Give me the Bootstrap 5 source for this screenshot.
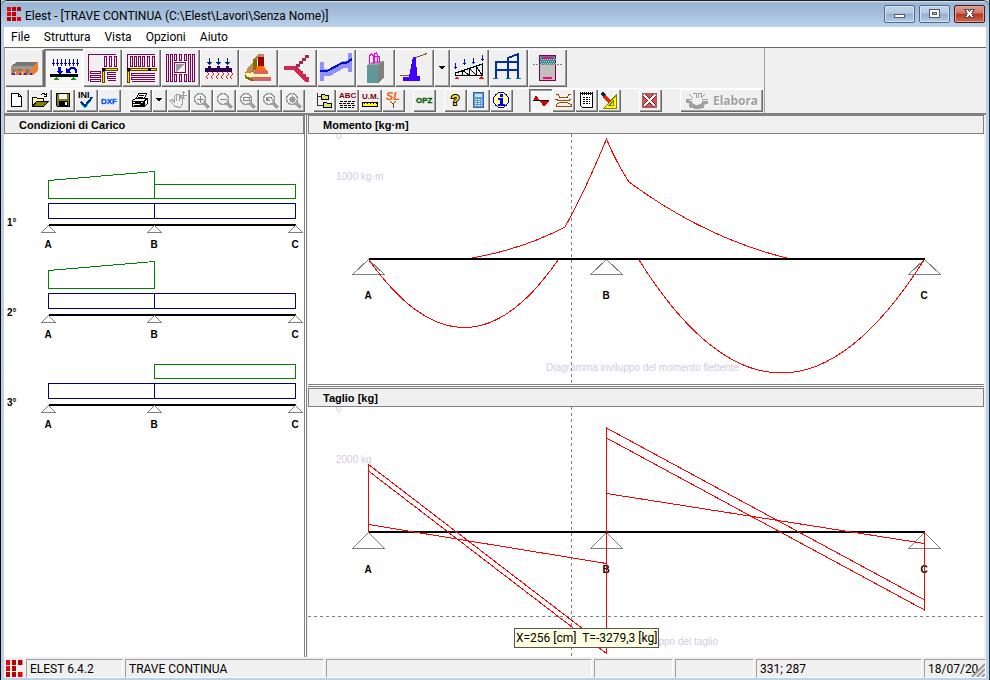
<!DOCTYPE html>
<html lang="it">
<head>
<meta charset="utf-8">
<meta name="viewport" content="width=device-width, initial-scale=1">
<title>Elest - Trave continua</title>
<link href="https://cdn.jsdelivr.net/npm/bootstrap@5.3.0/dist/css/bootstrap.min.css" rel="stylesheet">
<style>
:root{--ui:Roboto,"Open Sans",sans-serif;--face:#f0f0f0;--line:#808080}
body{font:12px/16px var(--ui);color:#000;background:#b9d1ea}
button{color:#000}
.app-window{min-height:100vh;border:solid #b9d1ea;border-width:0 4px 2px;background:var(--face);position:relative}
.app-window::before{content:"";position:absolute;top:0;bottom:-2px;left:-4px;right:-4px;border-left:1px solid #000;border-right:1px solid #17313a;pointer-events:none}
.title-strip{height:27px;margin:0 -3px;padding:0 4px 0 6px;border-top:1px solid #222;border-radius:6px 6px 0 0;background:linear-gradient(#dbe8f5 0,#98b4d2 2px,#a6c0dc 50%,#b9d1ea)}
.window-btn{width:31px;height:18px;border:1px solid #50688a;border-radius:2px;background:linear-gradient(#c3d4e8 0,#b4c9e1 45%,#93afcf 50%,#b5cde6);box-shadow:inset 0 0 0 1px #d5e3f1}
.window-close{background:linear-gradient(#dda093 0,#cf7363 45%,#b5361f 50%,#cf6a4e);border-color:#4b1a1e;box-shadow:inset 0 0 0 1px #e2a294}
.menu-strip{height:20px;background:#fff;gap:14px;padding-left:7px}
.menu-strip a{color:#000;text-decoration:none;line-height:20px}
.tool-area{border-top:1px solid #696969;border-bottom:2px solid #808080;height:68px}
.tool-inner{width:761px;border-right:1px solid #a0a0a0;border-left:1px solid #a0a0a0}
.big-row{height:41px;padding:1px 0;border-bottom:1px solid #fff}
.big-btn{width:39px;height:38px}
.small-row{height:24px;padding-left:1px}
.small-btn{width:23px;height:23px}
.drop-btn{width:16px}
.drop-small{width:15px;height:23px}
.tool-btn{flex:none;padding:0;border:0;background:var(--face);box-shadow:inset 1px 1px #fff,inset -1px -1px #696969,inset -2px -2px #a0a0a0;display:block}
.tool-btn svg,.window-btn svg{display:block;shape-rendering:crispEdges}
.tool-btn svg text,.plot text{font-family:"Liberation Sans",Arial,sans-serif;font-weight:700}
.tool-btn.pressed{background:repeating-conic-gradient(#fff 0 25%,#f0f0f0 0 50%) 0 0/2px 2px;box-shadow:inset 1px 1px #696969,inset 2px 2px #a0a0a0,inset -1px -1px #fff}
.tool-gap{width:8px;flex:none}
.tool-gap-wide{width:16px;flex:none}
.tool-gap-end{width:18px;flex:none}
.run-btn{width:83px;height:23px;color:#a0a0a0;font:700 12px/16px "Noto Sans",sans-serif;text-shadow:1px 1px #fff}
.main-area{padding-right:2px}
.left-pane{flex:300 0 0;background:#fff}
.split-v{width:3px;flex:none;border:solid var(--line);border-width:0 1px;background:#fff}
.right-panes{flex:676 0 0;margin-left:1px;min-width:0}
.pane-head{height:19px;border:1px solid var(--line);background:var(--face);padding-left:14px;font:700 11px/18px "Liberation Sans",Arial,sans-serif;margin:0}
.split-h{height:3px;border:solid var(--line);border-width:1px 0;flex:none;background:#fff;margin-bottom:1px}
.plot{display:block;width:100%;height:auto;background:#fff}
.crisp{shape-rendering:crispEdges}
.plot text{font-size:10px}
.plot .ghost{fill:#d3cbdf;font-size:10px;font-weight:400}
.tip{left:206px;top:240px;background:#ffffe1;border:1px solid #555;padding:1px;line-height:16px;white-space:pre}
.status-strip{height:21px;padding-top:2px;gap:2px;background:var(--face)}
.status-logo{margin:1px 1px 0 1px}
.status-cell{height:19px;border:1px solid;border-color:#a0a0a0 #fff #fff #a0a0a0;padding-left:3px;line-height:18px;overflow:hidden;white-space:nowrap;flex:none;position:relative}
.w-a{width:97px}.w-b{width:199px}.w-c{flex:1 1 0}.w-d{width:79px}.w-e{width:166px}.w-f{width:62px}
</style>
<script src="https://cdn.jsdelivr.net/npm/bootstrap@5.3.0/dist/js/bootstrap.bundle.min.js"></script>
</head>
<body>
<svg width="0" height="0" class="position-absolute" aria-hidden="true">
 <defs>
  <symbol id="logo" viewBox="0 0 14 14"><path fill="#f00000" d="M0 0h4v4H0zM0 5h4v4H0zM10 10h4v4h-4z"/><path fill="#b80000" d="M5 0h4v4H5zM10 0h4v4h-4zM5 5h4v4H5zM0 10h4v4H0zM5 10h4v4H5z"/></symbol>
  <symbol id="lens" viewBox="0 0 23 23"><circle cx="11" cy="11" r="5" fill="none" stroke="#fff"/><circle cx="10" cy="10" r="5.500" fill="none" stroke="#a0a0a0" stroke-width="1.500"/><path d="M14 14l5 5" stroke="#a0a0a0" stroke-width="3"/></symbol>
  <symbol id="down" viewBox="0 0 7 4"><path d="M0 0h7L3.500 4z"/></symbol>
 </defs>
</svg>
<div class="app-window d-flex flex-column">
 <header class="title-strip d-flex align-items-center">
  <svg class="crisp me-1" width="14" height="14" aria-hidden="true"><use href="#logo"/></svg>
  <span class="flex-grow-1 pt-1">Elest - [TRAVE CONTINUA (C:\Elest\Lavori\Senza Nome)]</span>
  <div class="d-flex gap-1">
   <button class="window-btn p-0" aria-label="Riduci a icona"><svg width="29" height="16"><rect x="9.500" y="8.500" width="10" height="3" fill="#fff" stroke="#4e5a6c"/></svg></button>
   <button class="window-btn p-0" aria-label="Ingrandisci"><svg width="29" height="16"><path d="M9.500 3.500h10v8h-10zM12.500 6.500h4v2h-4z" fill="#fff" fill-rule="evenodd" stroke="#4e5a6c"/></svg></button>
   <button class="window-btn window-close p-0" aria-label="Chiudi"><svg width="29" height="16"><path d="M9.500 3.500h3.500l1.500 2 1.500-2h3.500l-3 4 3 4h-3.500l-1.500-2-1.500 2h-3.500l3-4z" fill="#fff" stroke="#5c4a58"/></svg></button>
  </div>
 </header>
 <nav class="menu-strip d-flex" aria-label="Menu principale">
  <a href="#">File</a><a href="#">Struttura</a><a href="#">Vista</a><a href="#">Opzioni</a><a href="#">Aiuto</a>
 </nav>
 <div class="tool-area" role="toolbar" aria-label="Strumenti">
  <div class="tool-inner">
   <div class="big-row d-flex">
    <button class="tool-btn big-btn" aria-label="Solaio"><svg width="39" height="38"><path fill="#777" d="M6 17l6-4h21l-5 4z"/><path fill="#999" d="M6 17h22v3H6z"/><path fill="#ef7d31" d="M6 20h22v6H6zM28 17l5-4v9l-5 4z"/><path fill="#777" d="M8 20h2v3H8zM12 20h5v2h-5zM21 20h3v4h-3z"/><path fill="#3030d0" d="M7 24h3v2H7zM14 24h2v2h-2zM19 24h3v2h-3zM25 24h2v2h-2z"/><path fill="#fff" d="M10 23h1v2h-1zM17 23h1v2h-1z"/></svg></button>
    <button class="tool-btn big-btn pressed" aria-label="Trave continua"><svg width="39" height="38"><path fill="#0000d0" d="M9 10h1v4h1v1h-1v2H9v-2H8v-1h1zM13 10h1v4h1v1h-1v2h-1v-2h-1v-1h1zM17 10h1v4h1v1h-1v2h-1v-2h-1v-1h1zM21 10h1v4h1v1h-1v2h-1v-2h-1v-1h1zM25 10h1v4h1v1h-1v2h-1v-2h-1v-1h1zM29 10h1v4h1v1h-1v2h-1v-2h-1v-1h1zM33 10h1v4h1v1h-1v2h-1v-2h-1v-1h1zM14 18h3v4h2l-3 3-4-3h2zM22 19v5h5l-2-2 2-2h3l1 2v2h2v-3l-2-3h-5l-2 2z"/><path d="M6 25h28v3H6z"/><path fill="#00a000" d="M12 28l3 3H9zM29 28l3 3h-6z"/></svg></button>
    <button class="tool-btn big-btn" aria-label="Solaio a L"><svg width="39" height="38"><path fill="none" stroke="#800050" d="M5.500 32V5.500H33M21.500 7.500h2v10h-2zM26.500 7.500h2v10h-2zM31.500 7.500h2v10h-2zM7.500 22.500h10v2h-10zM7.500 26.500h10v2h-10zM7.500 30.500h10v2h-10zM33 23.500H24.500v2H33M33 27.500H24.500v2H33M33 31.500h-8.500"/><path d="M19 19h3v3h-3z"/><path fill="#ffe000" stroke="#604000" d="M22.500 19.500H34v2H22.500zM19.500 22.500h2V33h-2z"/></svg></button>
    <button class="tool-btn big-btn" aria-label="Solaio a T"><svg width="39" height="38"><path fill="none" stroke="#800050" d="M5.500 32V5.500H33M8.500 7.500h2v10h-2zM12.500 7.500h2v10h-2zM16.500 7.500h2v10h-2zM20.500 7.500h2v10h-2zM25.500 7.500h2v10h-2zM30.500 7.500h2v10h-2zM33 24.500H9.500v2H33M33 28.500H9.500v2H33M33 32.500H9.500"/><path fill="#ffe000" stroke="#604000" d="M8.500 19.500H34v2H8.500zM5.500 22.500h2V33h-2z"/><path d="M5 19h3v3H5zM26 19h3v3h-3z"/></svg></button>
    <button class="tool-btn big-btn" aria-label="Piastra"><svg width="39" height="38"><path fill="none" stroke="#800050" d="M5.500 5.500h2v27h-2zM9.500 5.500h2v27h-2zM27.500 5.500h2v27h-2zM31.500 5.500h2v27h-2zM13.500 5.500h2v6h-2zM18.500 5.500h2v6h-2zM23.500 5.500h2v6h-2zM13.500 25.500h2v7h-2zM18.500 25.500h2v7h-2zM23.500 25.500h2v7h-2zM13.500 13.500h11v10h-11z"/><path fill="#999" d="M15 15h9l-9 8z"/></svg></button>
    <button class="tool-btn big-btn" aria-label="Trave Winkler"><svg width="39" height="38"><path fill="#002878" d="M9 9h1v4h2l-2.500 3L7 13h2zM18 9h1v4h2l-2.500 3-2.500-3h2zM27 9h1v4h2l-2.500 3-2.500-3h2z"/><path fill="#300050" d="M5 19h3v-2h3v2h6v-2h3v2h6v-2h3v2h3v4H5z"/><path fill="none" stroke="#f02020" d="M7 23l2 2-3 3 2 2M12 23l2 2-3 3 2 2M17 23l2 2-3 3 2 2M22 23l2 2-3 3 2 2M27 23l2 2-3 3 2 2M31 23l2 2-3 3 2 2"/></svg></button>
    <button class="tool-btn big-btn" aria-label="Plinto"><svg width="39" height="38"><path fill="#c08860" d="M15 10l4-5h6v4l-6 1z"/><path fill="#807000" d="M14 10h4v10l-12 7v-4l8-6z"/><path fill="#c08860" d="M9 18l5-4v8l-8 4z"/><path fill="#a00000" d="M19 8h6v9h-6z"/><path fill="#ff6a10" d="M18 17h7l3 5H16z"/><path fill="#d86070" d="M14 22h15v3H15zM11 28h21v4H15z"/><path fill="#ffff80" d="M6 24h5l5 2h14v2H14l-8-3z"/><path fill="#807000" d="M6 27l6 2 3 3h-3l-6-3z"/></svg></button>
    <button class="tool-btn big-btn" aria-label="Scala"><svg width="39" height="38"><path fill="#d02850" d="M6 17h13l4 5h2v3h3v3h3v5h-4L15 21H6z"/><path fill="#a02858" d="M18 18v-3h3v-3h3V9h3V6h4v3h-3v3h-3v3h-3v3h-3v3z"/></svg></button>
    <button class="tool-btn big-btn" aria-label="Trave a ginocchio"><svg width="39" height="38"><path fill="#9090ff" d="M3 13h4v19H3zM31 4h4v19h-4zM7 20h5l14-8h5v7h-4l-14 8H7z"/><path fill="none" stroke="#0010d0" stroke-width="2" d="M3 22h7l15-8h4l6-4"/></svg></button>
    <button class="tool-btn big-btn" aria-label="Pilastro"><svg width="39" height="38"><path fill="#a0a0a0" d="M11 16l7-4h10l-5 4z"/><path fill="#609898" d="M11 16h11v18H11z"/><path fill="#808080" d="M22 16l6-4v17l-6 5z"/><path fill="none" stroke="#f000f0" d="M13.500 15V7l2-2 2 2v8M18.500 14V5l2-1 1 2v8M23.500 14V7h-6"/></svg></button>
    <button class="tool-btn big-btn" aria-label="Muro di sostegno"><svg width="39" height="38"><path fill="#4000ff" d="M18 8h3l1 19h3v5H8v-4h6z"/><path fill="none" stroke="#905010" d="M21 8.500l11-4M5 26.500h9"/></svg></button>
    <button class="tool-btn big-btn drop-btn" aria-label="Altri muri"><svg width="16" height="38"><use href="#down" x="4" y="17" width="8" height="4"/></svg></button>
    <button class="tool-btn big-btn" aria-label="Capriata"><svg width="39" height="38"><path fill="none" stroke="#000" d="M5.500 26.500h27V15L5.500 24zM12.500 26v-5M19.500 26v-7M26.500 26v-9M12 21l7 5M19 19l7 7M26 17l6 9"/><path fill="#0010d0" d="M5 14h1v4h1l-1.500 2L4 18h1zM14 10h1v4h1l-1.500 2-1.500-2h1zM23 9h1v4h1l-1.500 2-1.500-2h1zM32 6h1v4h1l-1.500 2-1.500-2h1z"/><path fill="#f01010" d="M7 27l2 3H4zM31 27l3 3h-6z"/></svg></button>
    <button class="tool-btn big-btn" aria-label="Telaio"><svg width="39" height="38"><path fill="none" stroke="#0030a0" stroke-width="2" d="M7 29V13h22M7 21h22M19 29V9l10-4v24"/><path fill="#008080" d="M4 29h5v1H4zM17 29h5v1h-5zM27 29h5v1h-5z"/></svg></button>
    <button class="tool-btn big-btn" aria-label="Verifica sezione"><svg width="39" height="38"><path fill="#c0c0c0" stroke="#800050" d="M11.500 6.500h16v25h-16z"/><path fill="#309090" d="M12 7h15v8H12z"/><path stroke="#b0d0d0" stroke-dasharray="1 1" d="M12 8.500h15M13 10.500h15M12 12.500h15M13 14.500h15"/><path fill="#ff0080" d="M14 8h11v2H14zM15 28h9v2h-9z"/><path stroke="#808080" stroke-dasharray="2 1" d="M5 15.500h30"/></svg></button>
   </div>
   <div class="small-row d-flex">
    <button class="tool-btn small-btn" aria-label="Nuovo"><svg width="23" height="23"><path fill="#fff" stroke="#000" d="M5.500 4.500h7l3 3v10h-10zM12.500 4.500v3h3"/></svg></button>
    <button class="tool-btn small-btn" aria-label="Apri"><svg width="23" height="23"><path fill="#ffff90" stroke="#000" d="M3.500 17V8.500h4l1 1h6v4"/><path fill="#808000" stroke="#000" d="M3.500 17.500l4-5h12l-5 5z"/><path fill="none" stroke="#000" d="M12 6l2-1.500 3 1M17.500 4v3h-3"/></svg></button>
    <button class="tool-btn small-btn" aria-label="Salva"><svg width="23" height="23"><path fill="#808000" stroke="#000" d="M4.500 4.500h13v13h-12l-1-1z"/><path fill="#f0f0f0" d="M7 5h8v5H7z"/><path d="M7 12h9v5H7z"/><path fill="#fff" d="M13 13h2v3h-2z"/></svg></button>
    <button class="tool-btn small-btn" aria-label="File INI"><svg width="23" height="23"><text x="3" y="9" font-size="9">INI</text><path fill="none" stroke="#00c8e0" d="M6 15l4 4 7-9"/><path fill="none" stroke="#003080" stroke-width="2" d="M6 13l4 4 7-9"/></svg></button>
    <button class="tool-btn small-btn" aria-label="Esporta DXF"><svg width="23" height="23"><text x="3" y="15" font-size="8" fill="#0000f0" stroke="#00a0ff" stroke-width=".3">DXF</text></svg></button>
    <span class="tool-gap"></span>
    <button class="tool-btn small-btn" aria-label="Stampa"><svg width="23" height="23"><path fill="#fff" stroke="#000" d="M7.500 9.500l2-5h8l-2 5zM3.500 11.500l3-2h12v5l-3 3h-12z"/><path stroke="#000" d="M10 6.500h5M9 8.500h5M4 12.500h11v5M15 12l3-2"/><path d="M4 14h11v1H4zM5 16h10v2H5z"/><path fill="#e0e000" d="M12 13h2v1h-2z"/></svg></button>
    <button class="tool-btn drop-small" aria-label="Opzioni di stampa"><svg width="15" height="23"><use href="#down" x="3" y="9" width="8" height="4"/></svg></button>
    <button class="tool-btn small-btn" aria-label="Sposta"><svg width="23" height="23"><path fill="none" stroke="#a0a0a0" d="M8 17.500l-5-6 2-1 2 2V7.500l2-1v5l1-6h2v6l2-4 1 1v7l-2 3zM16.500 2v8M12.500 6.500h7M15 3.500h3M15 9.500h3"/></svg></button>
    <button class="tool-btn small-btn" aria-label="Ingrandisci vista"><svg width="23" height="23"><use href="#lens"/><path stroke="#888" d="M7 10.500h7M10.500 7v7"/></svg></button>
    <button class="tool-btn small-btn" aria-label="Riduci vista"><svg width="23" height="23"><use href="#lens"/><path stroke="#888" d="M7 10.500h7"/></svg></button>
    <button class="tool-btn small-btn" aria-label="Zoom finestra"><svg width="23" height="23"><use href="#lens"/><path fill="none" stroke="#888" d="M7.500 8.500h6v3h-6z"/></svg></button>
    <button class="tool-btn small-btn" aria-label="Zoom precedente"><svg width="23" height="23"><use href="#lens"/><path fill="none" stroke="#888" d="M7.500 8v3h3M8 10.500l2-2h2l2 3"/></svg></button>
    <button class="tool-btn small-btn" aria-label="Zoom tutto"><svg width="23" height="23"><use href="#lens"/><path fill="#999" d="M10 6h1v2h2v2h1v1h-1v2h-2v1h-1v-1H8v-2H7v-1h1V8h2z"/></svg></button>
    <span class="tool-gap"></span>
    <button class="tool-btn small-btn" aria-label="Struttura dati"><svg width="23" height="23"><path fill="none" stroke="#333" d="M4.500 4v12.500H10M5 7.500h4"/><path fill="#e0e060" stroke="#000" d="M8.500 5.500h3l1 1h3v4h-7zM10.500 13.500h3l1 1h4v4h-8z"/></svg></button>
    <button class="tool-btn small-btn" aria-label="Testi"><svg width="23" height="23"><text x="3" y="9" font-size="8" fill="#800000">ABC</text><path stroke="#000" stroke-dasharray="3 1" d="M4 12.500h15M3 14.500h16M4 16.500h15M4 18.500h14"/></svg></button>
    <button class="tool-btn small-btn" aria-label="Unità di misura"><svg width="23" height="23"><text x="3" y="10" font-size="8" fill="#800000">U.M.</text><path fill="#ffff00" stroke="#000" d="M3.500 13.500h15v4h-15z"/><path stroke="#000" stroke-dasharray="1 2" d="M5 14.500h13"/></svg></button>
    <button class="tool-btn small-btn" aria-label="Stati limite"><svg width="23" height="23"><text x="4" y="11" font-size="11" font-style="italic" fill="#f06010">SL</text><path fill="none" stroke="#804000" d="M8 12l3 3 3-3M11.500 14v5"/></svg></button>
    <span class="tool-gap"></span>
    <button class="tool-btn small-btn" aria-label="Opzioni"><svg width="23" height="23"><text x="3" y="14" font-size="8" fill="#007000" stroke="#004000" stroke-width=".3">OPZ</text></svg></button>
    <span class="tool-gap"></span>
    <button class="tool-btn small-btn" aria-label="Guida"><svg width="23" height="23"><text x="7" y="16" font-size="14" fill="#ffe800" stroke="#000" stroke-width="2" paint-order="stroke">?</text></svg></button>
    <button class="tool-btn small-btn" aria-label="Calcolatrice"><svg width="23" height="23"><path fill="#5c98d8" stroke="#3868a8" d="M6.500 3.500h10v15h-10z"/><path fill="#c8e4ff" d="M8 5h7v3H8z"/><path stroke="#e0f0ff" stroke-dasharray="2 1" d="M8 10.500h7M8 12.500h7M8 14.500h7M8 16.500h7"/></svg></button>
    <button class="tool-btn small-btn" aria-label="Informazioni"><svg width="23" height="23"><circle cx="11" cy="11" r="7.500" fill="#ffffa0" stroke="#0000a0"/><path fill="#0000e0" d="M10 5h3v3h-3zM8 9h5v6h2v2H8v-2h2v-4H8z"/></svg></button>
    <span class="tool-gap-wide"></span>
    <button class="tool-btn small-btn pressed" aria-label="Diagrammi"><svg width="23" height="23"><path fill="#e00000" d="M4 12l3-6 4 6zM11 12h9l-5 6z"/><path stroke="#000" d="M4 11.500h16"/></svg></button>
    <button class="tool-btn small-btn" aria-label="Armature"><svg width="23" height="23"><path fill="none" stroke="#905010" d="M4 5.500h2l2 3h7l2-3h2M3.500 10.500l4 1h8l4-1M4 17.500h15v-2l-4-2H8l-4 2z"/></svg></button>
    <button class="tool-btn small-btn" aria-label="Relazione"><svg width="23" height="23"><path fill="#fff" stroke="#000" d="M5.500 4.500h12v14h-10l-2-2z"/><path stroke="#000" stroke-dasharray="1 1" d="M5 3.500h13M5 5.500h13"/><path stroke="#000" stroke-dasharray="2 1" d="M8 8.500h7M8 10.500h7M8 12.500h7M8 14.500h7"/></svg></button>
    <button class="tool-btn small-btn" aria-label="Disegno"><svg width="23" height="23"><path fill="#ffff00" stroke="#808000" fill-rule="evenodd" d="M18.500 6v13H6zM15.500 12v4h-4z"/><path stroke="#f02000" stroke-width="3" d="M6 7l6 6"/><path stroke="#003040" stroke-width="3" d="M4 4l3 3"/></svg></button>
    <span class="tool-gap-end"></span>
    <button class="tool-btn small-btn" aria-label="Chiudi struttura"><svg width="23" height="23"><path fill="#dc5050" stroke="#a06060" d="M3.500 4.500h14v14h-14z"/><path stroke="#702020" stroke-width="3" d="M5 6l11 11M16 6L5 17"/><path stroke="#fff" stroke-width="2" d="M5 6l11 11M16 6L5 17"/></svg></button>
    <span class="tool-gap-end"></span>
    <button class="tool-btn run-btn d-flex align-items-center ps-1 gap-1" disabled><svg width="25" height="20" aria-hidden="true"><path fill="none" stroke="#a0a0a0" stroke-width="4" d="M6 10a7 6 0 0 0 14 0"/><path fill="none" stroke="#a0a0a0" stroke-width="3" stroke-dasharray="3 3" d="M3 9a10 8 0 0 0 20 0"/><path fill="none" stroke="#a0a0a0" d="M2 8.500h6M18 8.500h6M5 3l4 4M9 2h3v5M14 7l1-5h2v5M18 6l3-3"/></svg>Elabora</button>
   </div>
  </div>
 </div>
 <main class="main-area d-flex flex-grow-1">
  <section class="left-pane">
   <h2 class="pane-head">Condizioni di Carico</h2>
   <svg class="plot" viewBox="4 134 300 523" role="img" aria-label="Condizioni di carico">
    <defs><g id="beam"><path fill="none" stroke="#000080" d="M48.500 203.500h247v15h-247zM154.500 203v16"/><path d="M49 224h247v2H49z"/><path fill="none" stroke="#808080" d="M41.500 232.500h14l-7-7zM147.500 232.500h14l-7-7zM288.500 232.500h14l-7-7z"/></g></defs>
    <g class="crisp"><use href="#beam"/><use href="#beam" y="90"/><use href="#beam" y="180"/>
    <path fill="none" stroke="#008000" d="M48.500 198.500v-18l106-9v27zM154.500 184.500h141v14h-141M48.500 288.500v-18l106-9v27zM154.500 364.500h141v14h-141z"/></g>
    <text x="7" y="226">1°</text><text x="7" y="316">2°</text><text x="7" y="406">3°</text>
    <g text-anchor="middle"><text x="48" y="248">A</text><text x="154" y="248">B</text><text x="295" y="248">C</text><text x="48" y="338">A</text><text x="154" y="338">B</text><text x="295" y="338">C</text><text x="48" y="428">A</text><text x="154" y="428">B</text><text x="295" y="428">C</text></g>
   </svg>
  </section>
  <div class="split-v"></div>
  <div class="right-panes d-flex flex-column">
   <section>
    <h2 class="pane-head">Momento [kg·m]</h2>
    <svg class="plot" viewBox="308 134 676 250" role="img" aria-label="Diagramma del momento">
     <text class="ghost" x="336" y="139">0</text><text class="ghost" x="336" y="180">1000 kg·m</text><text class="ghost" x="546" y="371">Diagramma inviluppo del momento flettente</text>
     <g class="crisp" fill="none" stroke="#808080"><path stroke-dasharray="3 3" d="M571.500 134v250"/><path d="M352.500 274.500h32l-16-15zM590.500 274.500h32l-16-15zM908.500 274.500h32l-16-15z"/></g>
     <path class="crisp" d="M369 258h556v2H369z"/>
     <g class="crisp" fill="none" stroke="#f00"><path d="M369 260Q465 395 558 260M639 260Q781 486 924 260"/><path d="M472 258Q523 249 565 227Q585 191 606.500 139Q616 162 629 182Q705 238 787 258"/></g>
     <g text-anchor="middle"><text x="368" y="299">A</text><text x="606" y="299">B</text><text x="924" y="299">C</text></g>
    </svg>
   </section>
   <div class="split-h"></div>
   <section class="position-relative">
    <h2 class="pane-head">Taglio [kg]</h2>
    <svg class="plot" viewBox="308 407 676 250" role="img" aria-label="Diagramma del taglio">
     <text class="ghost" x="336" y="412">0</text><text class="ghost" x="336" y="463">2000 kg</text><text class="ghost" x="718" y="645" text-anchor="end">Diagramma inviluppo del taglio</text>
     <g class="crisp" fill="none" stroke="#808080"><path stroke-dasharray="3 3" d="M571.500 407v250M308 616.500h676"/><path d="M352.500 548.500h32l-16-16zM590.500 548.500h32l-16-16zM908.500 548.500h32l-16-16z"/></g>
     <path class="crisp" d="M369 531h556v2H369z"/>
     <g text-anchor="middle"><text x="368" y="573">A</text><text x="606" y="573">B</text><text x="924" y="573">C</text></g>
     <path class="crisp" fill="none" stroke="#f00" d="M368.500 532v-67.500L606.500 647M368.500 471L606.500 653.500V428L924.500 600M368.500 524.500L606.500 563.500M606.500 438L924.500 610V532M606.500 493.500L924.500 543.500"/>
    </svg>
    <div class="tip position-absolute">X=256 [cm]  T=-3279,3 [kg]</div>
   </section>
  </div>
 </main>
 <footer class="status-strip d-flex">
  <svg class="crisp flex-shrink-0 status-logo" width="18" height="17" viewBox="0 0 14 14" aria-hidden="true"><use href="#logo" width="14" height="14"/></svg>
  <div class="status-cell w-a">ELEST 6.4.2</div><div class="status-cell w-b">TRAVE CONTINUA</div><div class="status-cell w-c"></div><div class="status-cell w-d"></div><div class="status-cell w-d"></div><div class="status-cell w-e">331; 287</div>
  <div class="status-cell w-f">18/07/20<svg class="position-absolute bottom-0 end-0" width="14" height="14"><path fill="#f0f0f0" d="M14 0v14H0z"/><path stroke="#999" stroke-width="2" d="M1 14L14 1M6 14l8-8M11 14l3-3"/></svg></div>
 </footer>
</div>
</body>
</html>
